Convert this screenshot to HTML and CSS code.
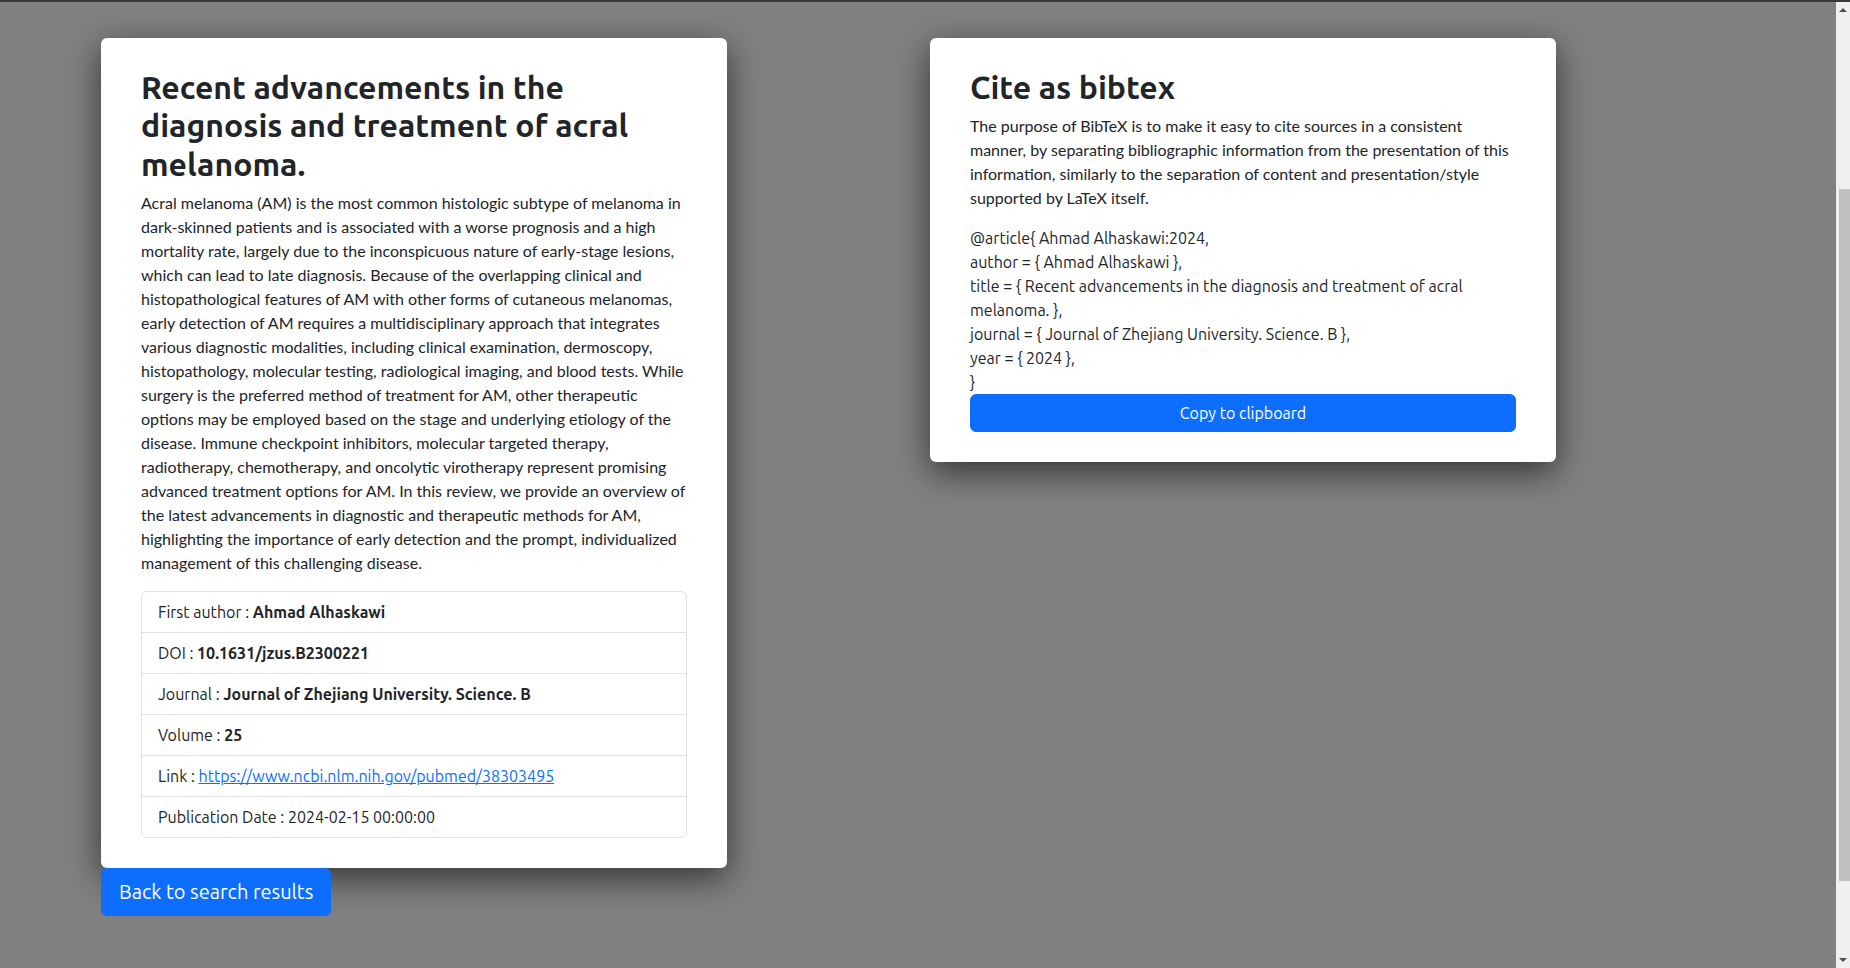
FILE: index.html
```html
<!DOCTYPE html>
<html lang="en">
<head>
<meta charset="utf-8">
<title>Recent advancements in the diagnosis and treatment of acral melanoma.</title>
<link rel="stylesheet" href="styles.css">
</head>
<body>
<div class="page">
  <div class="column">
    <div class="card">
      <h2 class="title">Recent advancements in the diagnosis and treatment of acral melanoma.</h2>
      <p class="abstract">Acral melanoma (AM) is the most common histologic subtype of melanoma in dark-skinned patients and is associated with a worse prognosis and a high mortality rate, largely due to the inconspicuous nature of early-stage lesions, which can lead to late diagnosis. Because of the overlapping clinical and histopathological features of AM with other forms of cutaneous melanomas, early detection of AM requires a multidisciplinary approach that integrates various diagnostic modalities, including clinical examination, dermoscopy, histopathology, molecular testing, radiological imaging, and blood tests. While surgery is the preferred method of treatment for AM, other therapeutic options may be employed based on the stage and underlying etiology of the disease. Immune checkpoint inhibitors, molecular targeted therapy, radiotherapy, chemotherapy, and oncolytic virotherapy represent promising advanced treatment options for AM. In this review, we provide an overview of the latest advancements in diagnostic and therapeutic methods for AM, highlighting the importance of early detection and the prompt, individualized management of this challenging disease.</p>
      <ul class="list">
        <li class="item">First author : <b>Ahmad Alhaskawi</b></li>
        <li class="item">DOI : <b>10.1631/jzus.B2300221</b></li>
        <li class="item">Journal : <b>Journal of Zhejiang University. Science. B</b></li>
        <li class="item">Volume : <b>25</b></li>
        <li class="item">Link : <a href="#">https://www.ncbi.nlm.nih.gov/pubmed/38303495</a></li>
        <li class="item">Publication Date : 2024-02-15 00:00:00</li>
      </ul>
    </div>
    <a class="btn btn-lg" href="#">Back to search results</a>
  </div>
  <div class="column">
    <div class="card">
      <h2 class="title">Cite as bibtex</h2>
      <p class="abstract">The purpose of BibTeX is to make it easy to cite sources in a consistent manner, by separating bibliographic information from the presentation of this information, similarly to the separation of content and presentation/style supported by LaTeX itself.</p>
      <div class="bibtex">@article{ Ahmad Alhaskawi:2024,<br>author = { Ahmad Alhaskawi },<br>title = { Recent advancements in the diagnosis and treatment of acral melanoma. },<br>journal = { Journal of Zhejiang University. Science. B },<br>year = { 2024 },<br>}</div>
      <button class="btn btn-block" type="button">Copy to clipboard</button>
    </div>
  </div>
</div>
<div class="scrollbar" aria-hidden="true">
  <span class="arrow arrow-up"></span>
  <div class="track"><div class="thumb"></div></div>
  <span class="arrow arrow-down"></span>
</div>
</body>
</html>
```
FILE: styles.css
```css
html {
  background: #808080;
  border-top: 2px solid #3a3a3a;
}
body {
  margin: 0;
  font-family: Ubuntu, Roboto, "Liberation Sans", sans-serif;
  font-size: 16px;
  line-height: 1.5;
  color: #212529;
}
.page {
  display: flex;
  align-items: flex-start;
  gap: 203px;
  padding: 36px 0 0 101px;
}
.column {
  width: 626px;
  display: flex;
  flex-direction: column;
  align-items: flex-start;
}
.card {
  box-sizing: border-box;
  width: 626px;
  background: #fff;
  border-radius: 6px;
  padding: 30px 40px;
  box-shadow: 0 10px 34px rgba(0, 0, 0, 0.6);
}
.title {
  margin: 0 0 8px;
  font-family: "Ubuntu Medium", Ubuntu, Roboto, sans-serif;
  font-size: 32px;
  font-weight: 700;
  line-height: 1.2;
}
.abstract {
  margin: 0 0 16px;
  font-family: Lato, sans-serif;
  font-size: 16px;
  line-height: 24px;
  color: #212529;
}
.list {
  list-style: none;
  margin: 0;
  padding: 0;
  border: 1px solid #dee2e6;
  border-radius: 6px;
}
.item {
  padding: 8px 16px;
  border-top: 1px solid #dee2e6;
}
.item:first-child {
  border-top: 0;
}
.item b {
  font-weight: 700;
}
.item a {
  color: #0d6efd;
}
.bibtex {
  margin: 0;
}
.btn {
  display: inline-block;
  box-sizing: border-box;
  background: #0d6efd;
  color: #fff;
  border: 1px solid #0d6efd;
  border-radius: 6px;
  font-family: Ubuntu, Roboto, "Liberation Sans", sans-serif;
  font-size: 16px;
  line-height: 24px;
  padding: 6px 12px;
  text-decoration: none;
  text-align: center;
  cursor: pointer;
}
.btn-lg {
  font-size: 20px;
  line-height: 30px;
  padding: 8px 17px;
}
.btn-block {
  display: block;
  width: 100%;
}
.scrollbar {
  position: fixed;
  top: 2px;
  right: 0;
  bottom: 0;
  width: 14px;
  background: #f0f0f0;
  display: flex;
  flex-direction: column;
  align-items: center;
}
.arrow {
  width: 0;
  height: 0;
  border-left: 4px solid transparent;
  border-right: 4px solid transparent;
  margin: 6px 0;
}
.arrow-up {
  border-bottom: 4px solid #505050;
}
.arrow-down {
  border-top: 4px solid #505050;
}
.track {
  flex: 1;
  width: 100%;
  display: flex;
  justify-content: center;
}
.thumb {
  width: 11px;
  height: 692px;
  margin-top: 171px;
  margin-left: 2px;
  background: #c1c1c1;
}
```
